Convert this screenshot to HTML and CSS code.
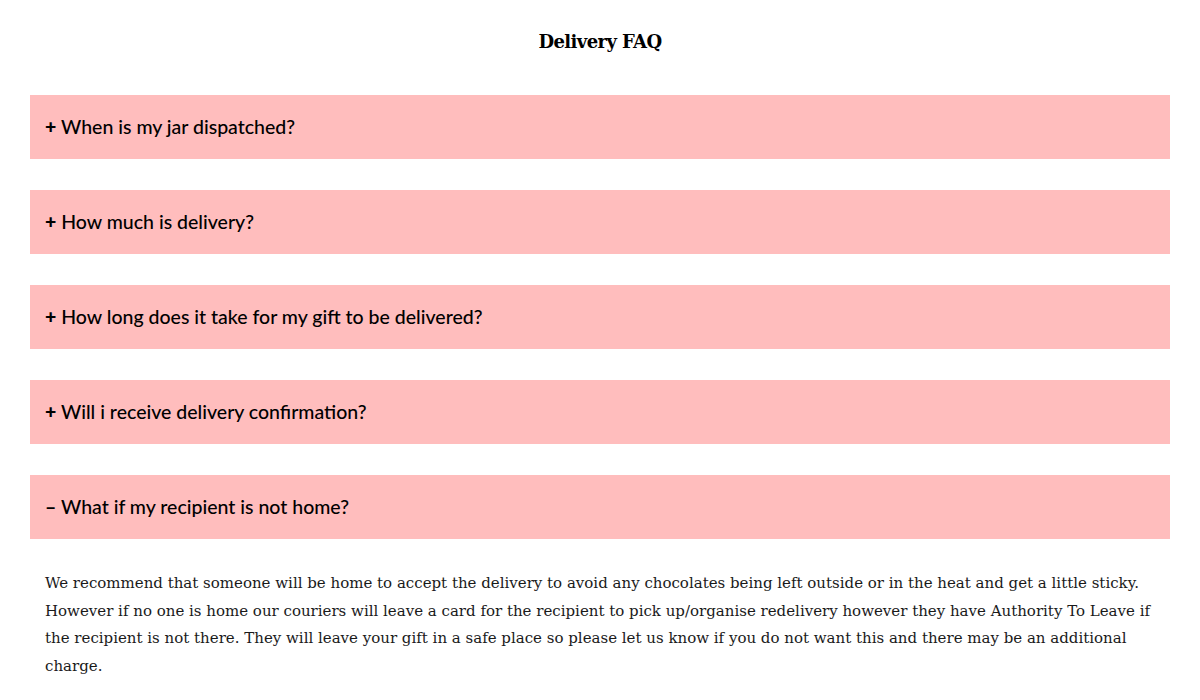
FILE: index.html
```html
<!DOCTYPE html>
<html lang="en">
<head>
    <meta charset="UTF-8">
    <meta name="viewport" content="width=device-width, initial-scale=1.0">
    <title>Delivery FAQ</title>
    <link rel="stylesheet" href="styles.css">
</head>
<body>
    <div class="container">
        <h1>Delivery FAQ</h1>

        <div class="faq">
            <div class="question"><span class="sign">+</span> When is my jar dispatched?</div>
        </div>
        <div class="faq">
            <div class="question"><span class="sign">+</span> How much is delivery?</div>
        </div>
        <div class="faq">
            <div class="question"><span class="sign">+</span> How long does it take for my gift to be delivered?</div>
        </div>
        <div class="faq">
            <div class="question"><span class="sign">+</span> Will i receive delivery confirmation?</div>
        </div>
        <div class="faq open">
            <div class="question"><span class="sign">&ndash;</span> What if my recipient is not home?</div>
            <p class="answer">We recommend that someone will be home to accept the delivery to avoid any chocolates being left outside or in the heat and get a little sticky. However if no one is home our couriers will leave a card for the recipient to pick up/organise redelivery however they have Authority To Leave if the recipient is not there. They will leave your gift in a safe place so please let us know if you do not want this and there may be an additional charge.</p>
        </div>
    </div>
</body>
</html>
```

FILE: styles.css
```css
body {
    margin: 0;
    background-color: #fff;
    color: #111;
    font-family: "DejaVu Serif", serif;
}
.container {
    padding: 0 30px;
}
h1 {
    margin: 0;
    padding-top: 30px;
    height: 95px;
    box-sizing: border-box;
    text-align: center;
    font-size: 18px;
    line-height: 24px;
    letter-spacing: -0.6px;
    font-weight: bold;
    color: #000;
}
.faq {
    margin-bottom: 31px;
}
.question {
    background-color: #ffbdbd;
    height: 64px;
    line-height: 64px;
    padding: 0 15px;
    font-family: Lato, "Open Sans", sans-serif;
    font-size: 19.5px;
    font-weight: 500;
    color: #000;
}
.sign {
    font-weight: 900;
}
.answer {
    margin: 0;
    padding: 31px 15px 0;
    font-size: 15px;
    line-height: 27.5px;
    color: #1a1a1a;
}
```
